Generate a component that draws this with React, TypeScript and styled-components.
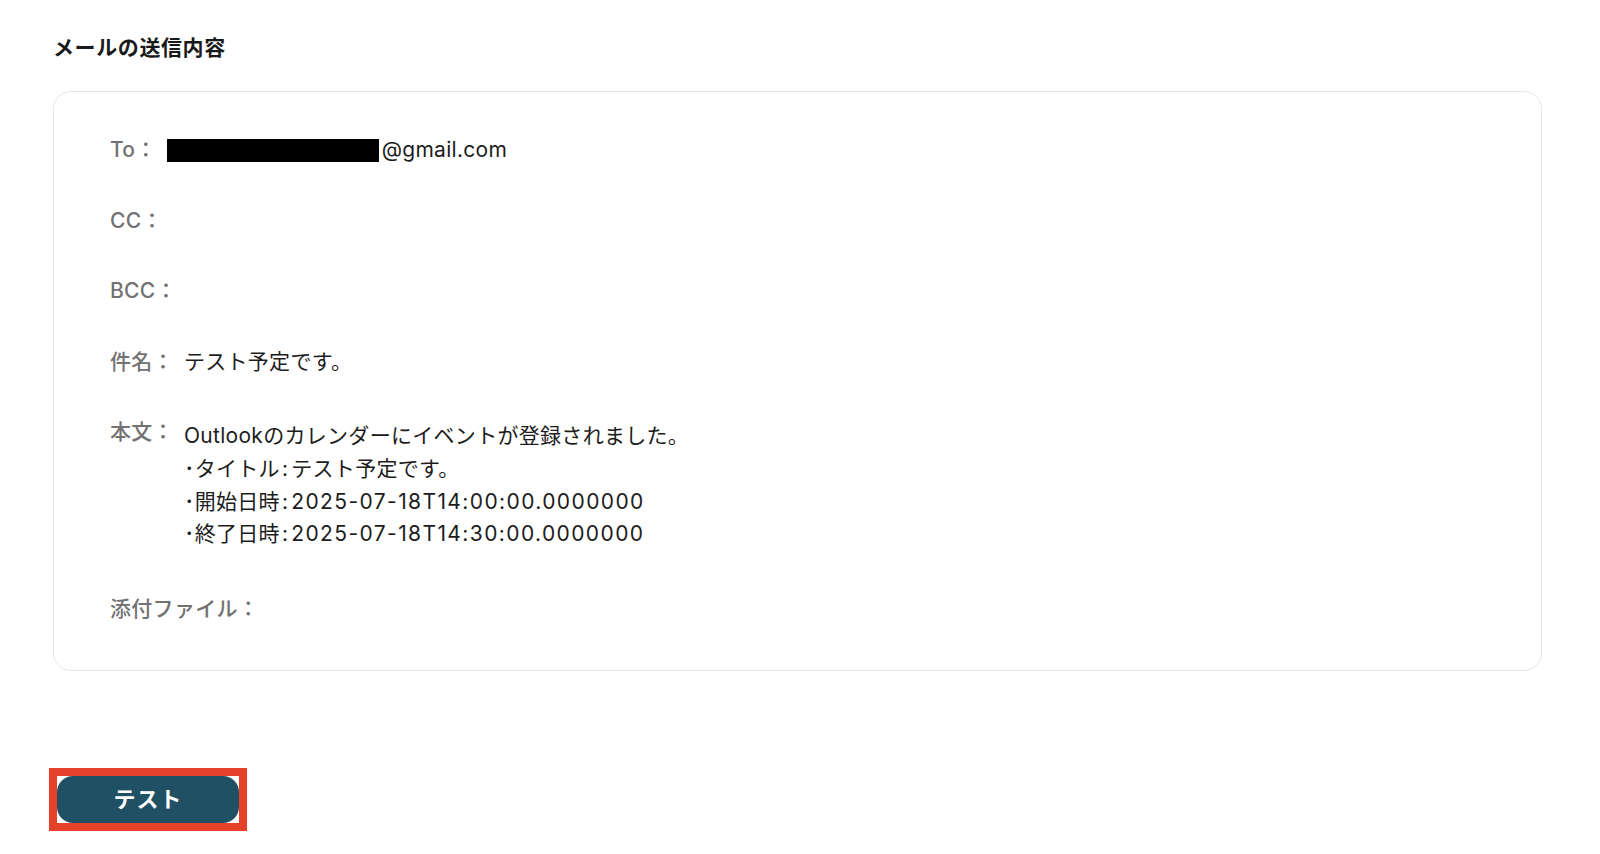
import styled, { createGlobalStyle } from 'styled-components'

const GlobalStyle = createGlobalStyle`
	html, body {
		margin: 0;
		padding: 0;
		background: #ffffff;
	}
	body {
		font-family: Inter, 'Noto Sans CJK JP', sans-serif;
		color: #1c1c1c;
	}
`

// a plain line, or a "key: value" pair from the mail body
type Line = string | [string, string]

type Field = {
	label: string
	lines?: Line[]
	redacted?: boolean
}

const fields: Field[] = [
	{ label: 'To：', lines: ['@gmail.com'], redacted: true },
	{ label: 'CC：' },
	{ label: 'BCC：' },
	{ label: '件名：', lines: ['テスト予定です。'] },
	{
		label: '本文：',
		lines: [
			'Outlookのカレンダーにイベントが登録されました。',
			['･タイトル', 'テスト予定です。'],
			['･開始日時', '2025-07-18T14:00:00.0000000'],
			['･終了日時', '2025-07-18T14:30:00.0000000'],
		],
	},
	{ label: '添付ファイル：' },
]

function renderLine(line: Line) {
	if (typeof line === 'string') {
		return line
	}
	const [key, value] = line
	return (
		<>
			{key}
			<Colon>:</Colon>
			<Tail $stamp={/^\d/.test(value)}>{value}</Tail>
		</>
	)
}

function App() {
	return (
		<Page>
			<GlobalStyle />
			<Title>メールの送信内容</Title>
			<Card>
				{fields.map((field) => (
					<Row key={field.label}>
						<Label>{field.label}</Label>
						{field.lines && (
							<Value $multiline={field.lines.length > 1}>
								{field.lines.map((line, idx) => (
									<TextLine key={idx}>
										{field.redacted && <Redacted />}
										{renderLine(line)}
									</TextLine>
								))}
							</Value>
						)}
					</Row>
				))}
			</Card>
			<ButtonArea>
				<Highlight>
					<TestButton>テスト</TestButton>
				</Highlight>
			</ButtonArea>
		</Page>
	)
}

const Page = styled.div`
	padding: 34px 58px 24px 53px;
`

const Title = styled.h2`
	margin: 0 0 29px;
	font-size: 21px;
	line-height: 28px;
	font-weight: 700;
	letter-spacing: 0.6px;
	color: #1a1a1a;
`

const Card = styled.div`
	border: 1px solid #e6e6e6;
	border-radius: 18px;
	padding: 42px 56px 45px;
	display: flex;
	flex-direction: column;
	gap: 38px;
`

const Row = styled.div`
	display: flex;
	align-items: flex-start;
	min-height: 32px;
`

const Label = styled.span`
	margin-right: 10px;
	font-size: 21px;
	line-height: 32.6px;
	font-weight: 500;
	color: #727272;
	letter-spacing: 0.3px;
	white-space: nowrap;
`

const Value = styled.div<{ $multiline?: boolean }>`
	display: flex;
	flex-direction: column;
	padding: ${(p) => (p.$multiline ? '4px 0' : '0')};
`

const TextLine = styled.span`
	display: flex;
	align-items: center;
	font-size: 21px;
	line-height: 32.6px;
	letter-spacing: 0.3px;
	color: #1c1c1c;
	white-space: pre;
`

const Colon = styled.span`
	margin: 0 3px 0 2px;
`

const Tail = styled.span<{ $stamp?: boolean }>`
	letter-spacing: ${(p) => (p.$stamp ? '1.4px' : '0.3px')};
`

const Redacted = styled.span`
	display: inline-block;
	width: 212px;
	height: 23px;
	margin-right: 3px;
	background: #000000;
`

const ButtonArea = styled.div`
	margin-top: 105px;
	padding-left: 4px;
	display: flex;
`

const Highlight = styled.div`
	display: flex;
	outline: 8px solid #e5402a;
`

const TestButton = styled.button`
	width: 182px;
	height: 47px;
	padding: 0 0 5px;
	border: none;
	border-radius: 16px;
	background: #1f5064;
	color: #ffffff;
	font-family: Inter, 'Noto Sans CJK JP', sans-serif;
	font-size: 22px;
	font-weight: 700;
	letter-spacing: 1px;
	cursor: pointer;
`

export default App
